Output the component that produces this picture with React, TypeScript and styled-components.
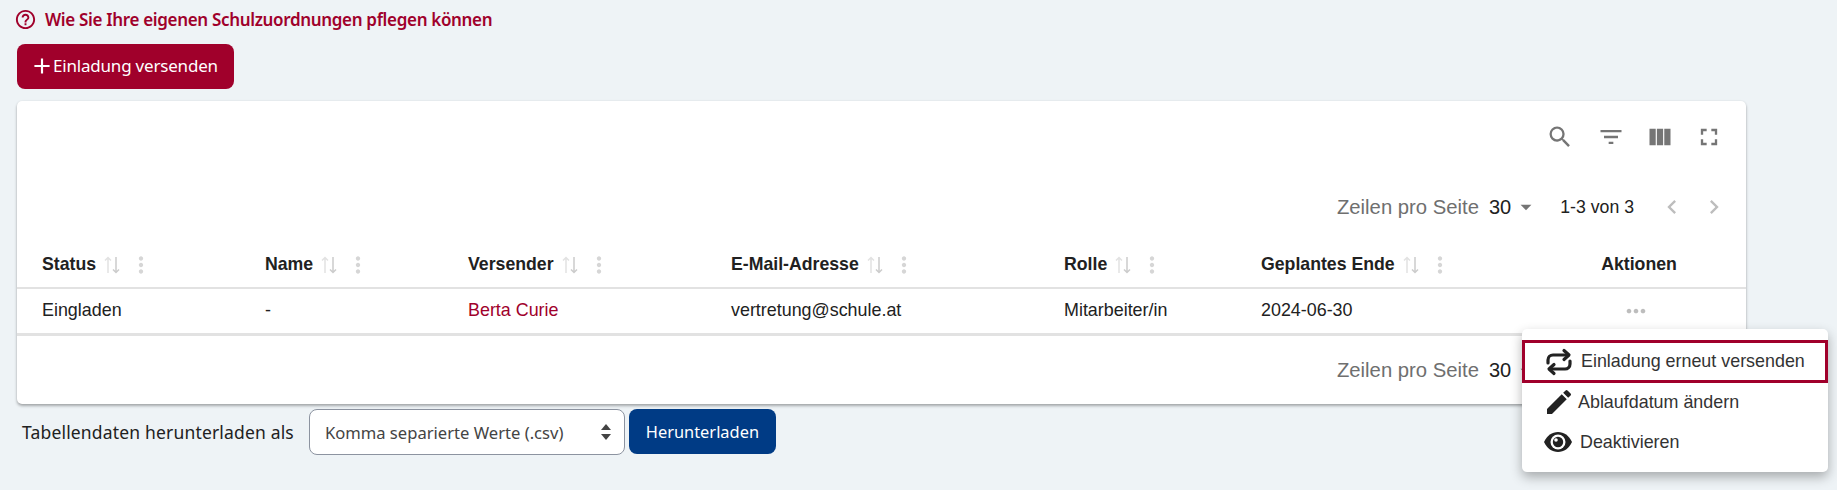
import styled, { createGlobalStyle } from "styled-components";
import {
  MdSearch,
  MdFilterList,
  MdViewColumn,
  MdFullscreen,
  MdArrowDropDown,
  MdChevronLeft,
  MdChevronRight,
  MdMoreVert,
  MdMoreHoriz,
  MdEdit,
  MdAdd,
  MdHelpOutline,
} from "react-icons/md";

const GlobalStyle = createGlobalStyle`
  html, body {
    margin: 0;
    height: 100%;
    background: #eef3f6;
    overflow: hidden;
  }
  * { box-sizing: border-box; }
`;

const brand = "#a0002b";
const uiFont = `"Noto Sans", "Open Sans", sans-serif`;
const tableFont = `"Liberation Sans", Arial, sans-serif`;

const Page = styled.div`
  position: relative;
  width: 1837px;
  height: 490px;
  padding: 7px 91px 0 17px;
  font-family: ${uiFont};
`;

const HelpLink = styled.div`
  display: flex;
  align-items: center;
  gap: 8px;
  height: 24px;
  margin-left: -3px;
  color: ${brand};
  font-size: 17px;
  font-weight: 600;
  letter-spacing: -0.33px;
`;

const PrimaryButton = styled.button`
  display: flex;
  align-items: center;
  width: 217px;
  height: 45px;
  margin-top: 13px;
  padding: 0 0 2px 15px;
  border: 0;
  border-radius: 8px;
  background: ${brand};
  color: #fff;
  font-family: ${uiFont};
  font-size: 17px;
  letter-spacing: -0.2px;
`;

const PlusIcon = styled.span`
  display: flex;
  margin: 0 -2px 0 -3px;
`;

const Card = styled.section`
  height: 303px;
  margin-top: 12px;
  border-radius: 5px;
  background: #fff;
  box-shadow: 0 2px 3px rgba(0, 0, 0, 0.3), 0 0 2px rgba(0, 0, 0, 0.08);
  font-family: ${tableFont};
  color: #212121;
`;

const Toolbar = styled.div`
  display: flex;
  justify-content: flex-end;
  gap: 21px;
  height: 73px;
  padding: 22px 23px 0 0;
  color: #757575;

  svg:first-child {
    margin-right: 2px;
  }
`;

const Pagination = styled.div<{ $height: number }>`
  display: flex;
  align-items: center;
  justify-content: flex-end;
  height: ${(p) => p.$height}px;
  padding-right: 18px;
`;

const PagerLabel = styled.span`
  color: #6f6f6f;
  font-size: 20.3px;
`;

const PagerValue = styled.span`
  margin-left: 10px;
  font-size: 20px;
  color: #212121;
`;

const PagerCaret = styled.span`
  display: flex;
  margin: 0 21px 0 2px;
  color: #757575;
`;

const PagerRange = styled.span`
  font-size: 17.7px;
  margin-right: 10px;
`;

const PagerArrow = styled.span`
  display: flex;
  margin-left: 14px;
  color: #bdbdbd;
`;

const Table = styled.table`
  width: 100%;
  table-layout: fixed;
  border-collapse: collapse;
`;

const HeadCell = styled.th<{ $width: number; $center?: boolean; $nudge?: number }>`
  width: ${(p) => p.$width}px;
  height: 48px;
  padding: 2px ${(p) => p.$nudge ?? 0}px 0 25px;
  border-bottom: 2px solid #e2e2e2;
  text-align: ${(p) => (p.$center ? "center" : "left")};
  font-size: 17.7px;
  font-weight: 700;
`;

const HeadInner = styled.div`
  display: flex;
  align-items: center;
`;

const SortIcon = styled.svg`
  margin-left: 7px;
`;

const ColumnMenu = styled.span`
  display: flex;
  margin-left: 7px;
  color: #d6d6d6;
`;

const BodyCell = styled.td<{ $center?: boolean; $nudge?: number }>`
  height: 46px;
  padding: 0 ${(p) => p.$nudge ?? 0}px 0 25px;
  border-bottom: 3px solid #e2e2e2;
  font-size: 17.9px;
  text-align: ${(p) => (p.$center ? "center" : "left")};
`;

const SenderLink = styled.span`
  color: ${brand};
`;

const RowDots = styled.span`
  display: inline-flex;
  vertical-align: middle;
  color: #bdbdbd;
`;

const DownloadRow = styled.div`
  display: flex;
  align-items: center;
  margin-top: 5px;
  padding-left: 5px;
`;

const DownloadLabel = styled.span`
  margin-right: 15px;
  font-size: 17.5px;
  color: #212121;
  letter-spacing: 0.17px;
`;

const FormatSelect = styled.div`
  display: flex;
  align-items: center;
  justify-content: space-between;
  width: 316px;
  height: 46px;
  padding: 0 12px 0 15px;
  border: 1px solid #8c93a0;
  border-radius: 8px;
  background: #fff;
  color: #444;
  font-size: 16.6px;
`;

const DownloadButton = styled.button`
  width: 147px;
  height: 45px;
  margin: -1px 0 0 4px;
  border: 0;
  border-radius: 8px;
  background: #003b85;
  color: #fff;
  font-family: ${uiFont};
  font-size: 16.4px;
`;

const ActionMenu = styled.div`
  position: absolute;
  left: 1522px;
  top: 329px;
  width: 306px;
  height: 143px;
  padding-top: 11px;
  border-radius: 5px;
  background: #fff;
  box-shadow: 0 5px 12px rgba(0, 0, 0, 0.3);
  font-family: ${tableFont};
  font-size: 17.9px;
  color: #333;
`;

const MenuItem = styled.div<{ $active?: boolean; $gap: number }>`
  display: flex;
  align-items: center;
  gap: ${(p) => p.$gap}px;
  height: ${(p) => (p.$active ? 43 : 40)}px;
  margin-bottom: ${(p) => (p.$active ? -1 : 0)}px;
  padding-left: ${(p) => (p.$active ? 20 : 21)}px;
  border: ${(p) => (p.$active ? `3px solid ${brand}` : "0")};
`;

const MenuIcon = styled.span`
  display: flex;
  color: #222;
`;

const SortArrows = () => (
  <SortIcon width="18" height="18" viewBox="0 0 18 18" fill="none" strokeWidth="1.5">
    <path d="M5 17V1.500M2 4.500 5 1.500 8 4.500" stroke="#e2e2e2" />
    <path d="M13 1v15.500M10 13.500l3 3 3-3" stroke="#cccccc" />
  </SortIcon>
);

const RepeatIcon = () => (
  <svg width="28" height="28" viewBox="0 0 28 28" fill="none" stroke="#222" strokeWidth="3.200" strokeLinecap="round" strokeLinejoin="round">
    <path d="M3 15v-3a5 5 0 0 1 5-5h15" />
    <path d="M19 2.500 24 7 19 11.500" />
    <path d="M25 13v3a5 5 0 0 1-5 5H5" />
    <path d="M9 16.500 4 21 9 25.500" />
  </svg>
);

const EyeIcon = () => (
  <svg width="30" height="30" viewBox="0 0 30 30">
    <path d="M1 15C4 8.500 9 5 15 5s11 3.500 14 10c-3 6.500-8 10-14 10S4 21.500 1 15z" fill="#222" />
    <circle cx="15" cy="15" r="7.500" fill="#fff" />
    <circle cx="15" cy="15" r="5.200" fill="#222" />
    <circle cx="13" cy="13" r="1.800" fill="#fff" />
  </svg>
);

const SelectArrows = () => (
  <svg width="12" height="20" viewBox="0 0 12 20" fill="#444">
    <path d="M6 2 11 8H1z" />
    <path d="M6 18 1 12h10z" />
  </svg>
);

const Pager = ({ height }: { height: number }) => (
  <Pagination $height={height}>
    <PagerLabel>Zeilen pro Seite</PagerLabel>
    <PagerValue>30</PagerValue>
    <PagerCaret>
      <MdArrowDropDown size={26} />
    </PagerCaret>
    <PagerRange>1-3 von 3</PagerRange>
    <PagerArrow>
      <MdChevronLeft size={28} />
    </PagerArrow>
    <PagerArrow>
      <MdChevronRight size={28} />
    </PagerArrow>
  </Pagination>
);

const columns = [
  { title: "Status", width: 223 },
  { title: "Name", width: 203 },
  { title: "Versender", width: 263 },
  { title: "E-Mail-Adresse", width: 333 },
  { title: "Rolle", width: 197 },
  { title: "Geplantes Ende", width: 300 },
];

const App = () => {
  return (
    <Page>
      <GlobalStyle />
      <HelpLink>
        <MdHelpOutline size={23} />
        Wie Sie Ihre eigenen Schulzuordnungen pflegen können
      </HelpLink>
      <PrimaryButton>
        <PlusIcon>
          <MdAdd size={26} />
        </PlusIcon>
        Einladung versenden
      </PrimaryButton>

      <Card>
        <Toolbar>
          <MdSearch size={28} />
          <MdFilterList size={28} />
          <MdViewColumn size={28} />
          <MdFullscreen size={28} />
        </Toolbar>
        <Pager height={66} />
        <Table>
          <thead>
            <tr>
              {columns.map((col) => (
                <HeadCell key={col.title} $width={col.width}>
                  <HeadInner>
                    {col.title}
                    <SortArrows />
                    <ColumnMenu>
                      <MdMoreVert size={26} />
                    </ColumnMenu>
                  </HeadInner>
                </HeadCell>
              ))}
              <HeadCell $width={210} $center $nudge={29}>
                Aktionen
              </HeadCell>
            </tr>
          </thead>
          <tbody>
            <tr>
              <BodyCell>Eingladen</BodyCell>
              <BodyCell>-</BodyCell>
              <BodyCell>
                <SenderLink>Berta Curie</SenderLink>
              </BodyCell>
              <BodyCell>vertretung@schule.at</BodyCell>
              <BodyCell>Mitarbeiter/in</BodyCell>
              <BodyCell>2024-06-30</BodyCell>
              <BodyCell $center $nudge={35}>
                <RowDots>
                  <MdMoreHoriz size={28} />
                </RowDots>
              </BodyCell>
            </tr>
          </tbody>
        </Table>
        <Pager height={70} />
      </Card>

      <DownloadRow>
        <DownloadLabel>Tabellendaten herunterladen als</DownloadLabel>
        <FormatSelect>
          Komma separierte Werte (.csv)
          <SelectArrows />
        </FormatSelect>
        <DownloadButton>Herunterladen</DownloadButton>
      </DownloadRow>

      <ActionMenu>
        <MenuItem $active $gap={8}>
          <MenuIcon>
            <RepeatIcon />
          </MenuIcon>
          Einladung erneut versenden
        </MenuItem>
        <MenuItem $gap={3}>
          <MenuIcon>
            <MdEdit size={32} />
          </MenuIcon>
          Ablaufdatum ändern
        </MenuItem>
        <MenuItem $gap={7}>
          <MenuIcon>
            <EyeIcon />
          </MenuIcon>
          Deaktivieren
        </MenuItem>
      </ActionMenu>
    </Page>
  );
};

export default App;
